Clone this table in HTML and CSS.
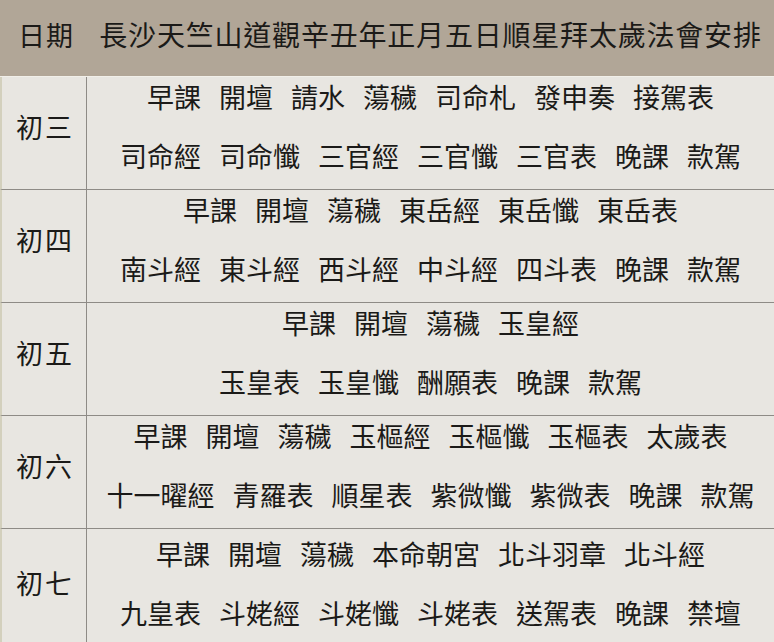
FILE: index.html
```html
<!DOCTYPE html>
<html lang="zh-Hant">
<head>
<meta charset="utf-8">
<title>法會安排</title>
<link rel="stylesheet" href="styles.css">
</head>
<body>
<div class="table">
  <div class="head">
    <div class="head-date">日期</div>
    <div class="head-title">長沙天竺山道觀辛丑年正月五日順星拜太歲法會安排</div>
  </div>

  <div class="row">
    <div class="day">初三</div>
    <div class="items">
      <div class="line"><span>早課</span><span>開壇</span><span>請水</span><span>蕩穢</span><span>司命札</span><span>發申奏</span><span>接駕表</span></div>
      <div class="line"><span>司命經</span><span>司命懺</span><span>三官經</span><span>三官懺</span><span>三官表</span><span>晚課</span><span>款駕</span></div>
    </div>
  </div>

  <div class="row">
    <div class="day">初四</div>
    <div class="items">
      <div class="line"><span>早課</span><span>開壇</span><span>蕩穢</span><span>東岳經</span><span>東岳懺</span><span>東岳表</span></div>
      <div class="line"><span>南斗經</span><span>東斗經</span><span>西斗經</span><span>中斗經</span><span>四斗表</span><span>晚課</span><span>款駕</span></div>
    </div>
  </div>

  <div class="row">
    <div class="day">初五</div>
    <div class="items">
      <div class="line"><span>早課</span><span>開壇</span><span>蕩穢</span><span>玉皇經</span></div>
      <div class="line"><span>玉皇表</span><span>玉皇懺</span><span>酬願表</span><span>晚課</span><span>款駕</span></div>
    </div>
  </div>

  <div class="row">
    <div class="day">初六</div>
    <div class="items">
      <div class="line"><span>早課</span><span>開壇</span><span>蕩穢</span><span>玉樞經</span><span>玉樞懺</span><span>玉樞表</span><span>太歲表</span></div>
      <div class="line"><span>十一曜經</span><span>青羅表</span><span>順星表</span><span>紫微懺</span><span>紫微表</span><span>晚課</span><span>款駕</span></div>
    </div>
  </div>

  <div class="row last">
    <div class="day">初七</div>
    <div class="items">
      <div class="line"><span>早課</span><span>開壇</span><span>蕩穢</span><span>本命朝宮</span><span>北斗羽章</span><span>北斗經</span></div>
      <div class="line"><span>九皇表</span><span>斗姥經</span><span>斗姥懺</span><span>斗姥表</span><span>送駕表</span><span>晚課</span><span>禁壇</span></div>
    </div>
  </div>
</div>
</body>
</html>
```

FILE: styles.css
```css
*, *::before, *::after {
  box-sizing: border-box;
}

html, body {
  margin: 0;
  padding: 0;
  background: #e8e6e1;
}

body {
  font-family: "Noto Sans CJK TC", "Noto Sans CJK SC", "Noto Sans CJK JP", sans-serif;
  color: #1b1a18;
  width: 774px;
  height: 642px;
  overflow: hidden;
}

.table {
  display: flex;
  flex-direction: column;
  width: 774px;
}

.head {
  display: grid;
  grid-template-columns: 87px 1fr;
  grid-template-rows: minmax(0, 1fr);
  align-items: center;
  height: 77px;
  padding-bottom: 8px;
  background: #b1a697;
  border-bottom: 1px solid #f1efe9;
}

.head-date {
  font-size: 27px;
  letter-spacing: 1px;
  padding-left: 18px;
}

.head-title {
  font-size: 28px;
  letter-spacing: 0.8px;
  text-align: center;
}

.row {
  display: grid;
  grid-template-columns: 85px 1fr;
  grid-template-rows: minmax(0, 1fr);
  height: 113px;
  flex: none;
  border-bottom: 1px solid #8e8b86;
  border-left: 2px solid #d3d0bd;
}

.row.last {
  border-bottom: none;
  height: 121px;
}

.day {
  display: flex;
  align-items: center;
  justify-content: center;
  min-height: 0;
  border-right: 1px solid #8e8b86;
  font-size: 27px;
  letter-spacing: 2px;
  padding-left: 2px;
  padding-bottom: 14px;
}

.items {
  display: flex;
  flex-direction: column;
  justify-content: center;
  align-items: center;
  min-height: 0;
  padding-bottom: 14px;
}

.line {
  display: flex;
  flex: none;
  gap: 18px;
  font-size: 27px;
  line-height: 59px;
  white-space: nowrap;
}
```
